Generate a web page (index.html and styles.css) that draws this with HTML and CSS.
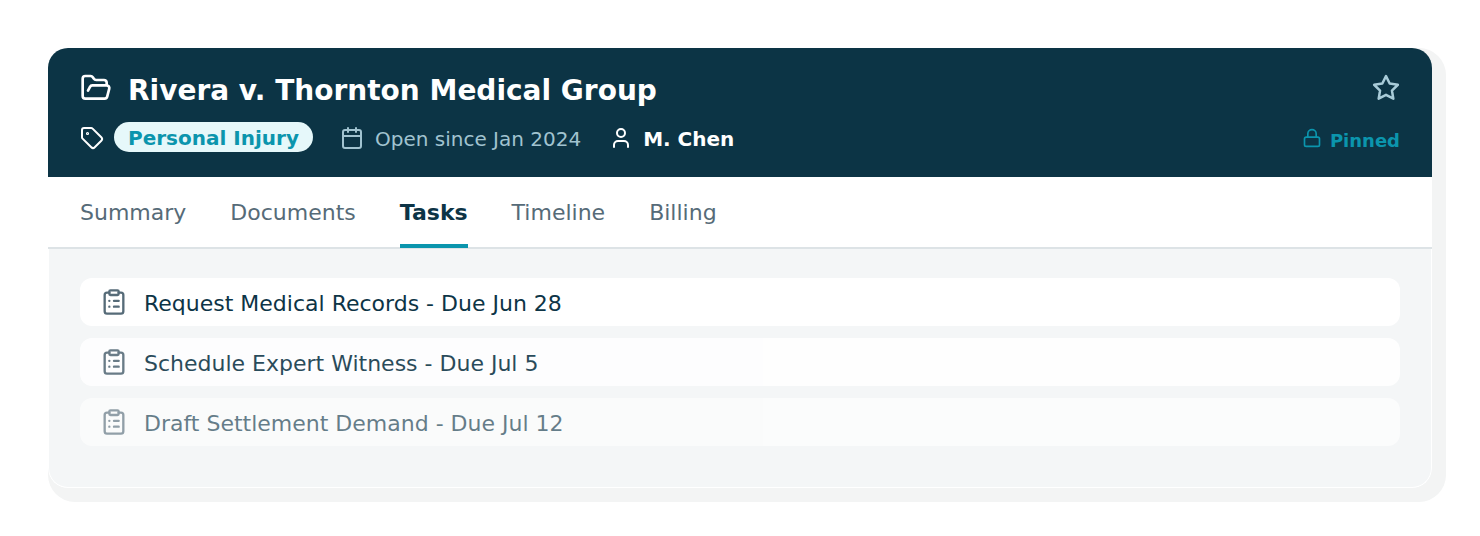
FILE: index.html
```html
<!DOCTYPE html>
<html lang="en">
<head>
<meta charset="utf-8">
<title>Rivera v. Thornton Medical Group</title>
<link rel="stylesheet" href="styles.css">
</head>
<body>
<main class="card">
  <header class="head">
    <div class="head-row title-row">
      <svg class="ic folder" viewBox="0 0 24 24"><path d="M6 14l1.5-2.9A2 2 0 0 1 9.24 10H20a2 2 0 0 1 1.94 2.5l-1.54 6a2 2 0 0 1-1.95 1.5H4a2 2 0 0 1-2-2V5a2 2 0 0 1 2-2h3.9a2 2 0 0 1 1.69.9l.81 1.2a2 2 0 0 0 1.67.9H18a2 2 0 0 1 2 2v2"/></svg>
      <h1>Rivera v. Thornton Medical Group</h1>
      <svg class="ic star" viewBox="0 0 24 24"><path d="M12 2.5l2.94 5.95 6.56.95-4.75 4.63 1.12 6.54L12 17.5l-5.87 3.07 1.12-6.54L2.5 9.4l6.56-.95z"/></svg>
    </div>
    <div class="head-row meta-row">
      <svg class="ic tag" viewBox="0 0 24 24"><path d="M12.59 2.59A2 2 0 0 0 11.17 2H4a2 2 0 0 0-2 2v7.17a2 2 0 0 0 .59 1.42l8.7 8.7a2.43 2.43 0 0 0 3.42 0l6.58-6.58a2.43 2.43 0 0 0 0-3.42z"/><circle class="dot" cx="7.5" cy="7.5" r=".6"/></svg>
      <span class="pill">Personal Injury</span>
      <svg class="ic cal" viewBox="0 0 24 24"><path d="M8 2v4M16 2v4M3 10h18"/><rect x="3" y="4" width="18" height="18" rx="2"/></svg>
      <span class="since">Open since Jan 2024</span>
      <svg class="ic user" viewBox="0 0 24 24"><path d="M19 21v-2a4 4 0 0 0-4-4H9a4 4 0 0 0-4 4v2"/><circle cx="12" cy="7" r="4"/></svg>
      <span class="owner">M. Chen</span>
      <span class="pinned">
        <svg class="ic lock" viewBox="0 0 24 24"><rect x="3" y="11" width="18" height="11" rx="2"/><path d="M7 11V7a5 5 0 0 1 10 0v4"/></svg>
        Pinned
      </span>
    </div>
  </header>
  <nav class="tabs">
    <a class="tab">Summary</a>
    <a class="tab">Documents</a>
    <a class="tab active">Tasks</a>
    <a class="tab">Timeline</a>
    <a class="tab">Billing</a>
  </nav>
  <section class="tasks">
    <div class="task t1">
      <svg class="ic clip" viewBox="0 0 24 24"><rect x="8" y="2" width="8" height="4" rx="1"/><path d="M16 4h2a2 2 0 0 1 2 2v14a2 2 0 0 1-2 2H6a2 2 0 0 1-2-2V6a2 2 0 0 1 2-2h2M12 11h4M12 16h4M8 11h.01M8 16h.01"/></svg>
      <span class="task-text">Request Medical Records - Due Jun 28</span>
    </div>
    <div class="task t2">
      <svg class="ic clip" viewBox="0 0 24 24"><rect x="8" y="2" width="8" height="4" rx="1"/><path d="M16 4h2a2 2 0 0 1 2 2v14a2 2 0 0 1-2 2H6a2 2 0 0 1-2-2V6a2 2 0 0 1 2-2h2M12 11h4M12 16h4M8 11h.01M8 16h.01"/></svg>
      <span class="task-text">Schedule Expert Witness - Due Jul 5</span>
    </div>
    <div class="task t3">
      <svg class="ic clip" viewBox="0 0 24 24"><rect x="8" y="2" width="8" height="4" rx="1"/><path d="M16 4h2a2 2 0 0 1 2 2v14a2 2 0 0 1-2 2H6a2 2 0 0 1-2-2V6a2 2 0 0 1 2-2h2M12 11h4M12 16h4M8 11h.01M8 16h.01"/></svg>
      <span class="task-text">Draft Settlement Demand - Due Jul 12</span>
    </div>
  </section>
</main>
</body>
</html>
```

FILE: styles.css
```css
* { box-sizing: border-box; }
html, body { margin: 0; background: #fff; }
body { padding: 48px; font-family: "DejaVu Sans", sans-serif; }
.card {
  width: 1384px;
  height: 440px;
  border-radius: 20px;
  overflow: hidden;
  background: #f4f6f7;
  box-shadow: 7px 7px 0 7px #f3f4f4;
  display: flex;
  flex-direction: column;
}
.ic { fill: none; stroke: currentColor; stroke-width: 2; stroke-linecap: round; stroke-linejoin: round; flex: none; }
.head { height: 129px; background: #0c3445; padding: 25px 32px 0; color: #fff; }
.head-row { display: flex; align-items: center; }
.title-row { height: 36px; }
.folder { width: 32px; height: 32px; margin-top: -6px; }
h1 { margin: 0 0 0 16px; font-size: 28px; font-weight: 700; flex: 1; line-height: 36px; }
.star { width: 30px; height: 30px; color: #a8cbd8; margin: -6px -1px 0 0; }
.meta-row { margin-top: 13px; height: 30px; font-size: 20px; }
.tag { width: 24px; height: 24px; margin-top: 2px; }
.pill { margin-left: 10px; height: 30px; padding: 0 14px; border-radius: 15px; background: #e6f8fa; color: #0b95ad; font-weight: 700; line-height: 32px; }
.cal { width: 24px; height: 24px; color: #a1c3d0; margin-left: 27px; margin-top: 2px; }
.since { margin-left: 11px; color: #a1c3d0; margin-top: 4px; }
.user { width: 24px; height: 24px; margin-left: 28px; margin-top: 2px; }
.owner { margin-left: 10px; font-weight: 700; margin-top: 4px; }
.pinned { margin-left: auto; display: flex; align-items: center; gap: 8px; color: #0b95ad; font-size: 18px; font-weight: 700; margin-top: 6px; }
.lock { width: 20px; height: 20px; margin-top: -4px; }
.tabs { height: 72px; background: #fff; border-bottom: 2px solid #dde3e6; display: flex; gap: 44px; padding: 0 32px; }
.tab { height: 71px; line-height: 72px; font-size: 22px; color: #566b78; }
.tab.active { color: #0d3446; font-weight: 700; border-bottom: 4px solid #0b95ad; }
.tasks { flex: 1; padding: 29px 31px 0; display: flex; flex-direction: column; gap: 12px; border: solid #fff; border-width: 0 1px 1px; border-radius: 0 0 20px 20px; }
.task { flex: none; height: 48px; border-radius: 12px; background: #fff; display: flex; align-items: center; padding-left: 20px; gap: 16px; font-size: 22px; color: #0d3446; }
.task-text { margin-top: 2px; }
.clip { width: 28px; height: 28px; color: #566b78; }
.t2 { opacity: .88; }
.t3 { opacity: .62; }
```
